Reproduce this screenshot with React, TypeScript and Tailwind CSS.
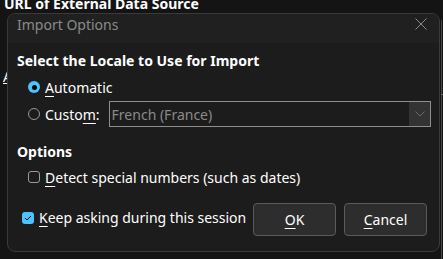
import React from "react";

const font = { fontFamily: '"Noto Sans", "Open Sans", sans-serif' };

function U({ children }: { children: React.ReactNode }) {
  return <span className="underline underline-offset-[3px] decoration-1">{children}</span>;
}

export default function App() {
  return (
    <div className="relative w-[443px] h-[259px] overflow-hidden bg-[#141414] text-white" style={font}>
      <div className="absolute left-[4px] top-[-7px] text-[14px] font-bold text-white whitespace-nowrap">URL of External Data Source</div>
      <div className="absolute left-[3px] top-[66px] text-[14px] text-white underline">A</div>
      <div className="absolute left-[441px] top-[20px] w-px h-[240px] bg-[#4a4a4a]"></div>
      <div className="absolute left-[441px] top-[94px] w-[2px] h-px bg-[#6a6a6a]"></div>

      <div className="absolute left-[7px] top-[13px] w-[433px] h-[239px] rounded-[8px] border border-[#3a3a3a] bg-[#1c1c1c] overflow-hidden flex flex-col">
        <div className="h-[29px] bg-[#202020] flex items-start justify-between pl-[9px] pr-[12px] pt-[1px] shrink-0">
          <span className="text-[14px] leading-[19px] text-[#8a8a8a]">Import Options</span>
          <svg width="12" height="12" viewBox="0 0 12 12" className="mt-[3px]">
            <path d="M0.5 0.5 L11.5 11.5 M11.5 0.5 L0.5 11.5" stroke="#8a8a8a" strokeWidth="1" />
          </svg>
        </div>
        <div className="flex flex-col pl-[9px] pr-[8px] pt-[8px] text-[14px]">
          <div className="font-bold leading-[19px]">Select the Locale to Use for Import</div>
          <div className="flex items-center gap-[5px] pl-[11px] mt-[7px] h-[20px]">
            <span className="w-[12px] h-[12px] rounded-full bg-[#4cc2ff] flex items-center justify-center">
              <span className="w-[5px] h-[5px] rounded-full bg-black"></span>
            </span>
            <span><U>A</U>utomatic</span>
          </div>
          <div className="flex items-center pl-[11px] mt-[4px] h-[26px]">
            <span className="w-[12px] h-[12px] rounded-full border border-[#9a9a9a] bg-[#1c1c1c]"></span>
            <span className="ml-[5px]">Custo<U>m</U>:</span>
            <div className="ml-[9px] flex-1 h-[26px] border border-[#8f8f8f] flex items-center">
              <span className="pl-[2px] flex-1 text-[#8a8a8a]">French (France)</span>
              <div className="w-[21px] h-full bg-[#333333] flex items-center justify-center">
                <svg width="10" height="6" viewBox="0 0 10 6">
                  <path d="M0.5 0.5 L5 5 L9.5 0.5" stroke="#6a6a6a" strokeWidth="1" fill="none" />
                </svg>
              </div>
            </div>
          </div>
          <div className="font-bold leading-[19px] mt-[15px]">Options</div>
          <div className="flex items-center gap-[5px] pl-[11px] mt-[6px] h-[20px]">
            <span className="w-[12px] h-[12px] rounded-[3px] border border-[#9a9a9a]"></span>
            <span><U>D</U>etect special numbers (such as dates)</span>
          </div>
          <div className="flex items-center mt-[16px]">
            <div className="flex items-center gap-[5px] pl-[5px] flex-1 mb-[4px]">
              <span className="w-[12px] h-[12px] rounded-[3px] bg-[#4cc2ff] flex items-center justify-center">
                <svg width="8" height="6" viewBox="0 0 8 6">
                  <path d="M1 3 L3 5 L7 1" stroke="#000" strokeWidth="1" fill="none" />
                </svg>
              </span>
              <span><U>K</U>eep asking during this session</span>
            </div>
            <div className="w-[83px] h-[33px] rounded-[4px] border border-[#5a5a5a] bg-[#2d2d2d] flex items-center justify-center mr-[8px]">
              <span><U>O</U>K</span>
            </div>
            <div className="w-[83px] h-[33px] rounded-[4px] border border-[#5a5a5a] bg-[#2d2d2d] flex items-center justify-center mr-[4px]">
              <span><U>C</U>ancel</span>
            </div>
          </div>
        </div>
      </div>
    </div>
  );
}
